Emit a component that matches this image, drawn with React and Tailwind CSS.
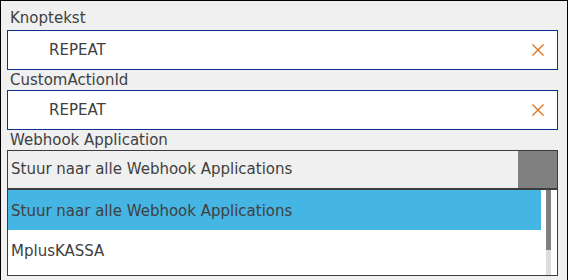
import React from "react";

const font = { fontFamily: '"DejaVu Sans", "Open Sans", sans-serif' };

const ClearIcon = () => (
  <svg width="14" height="14" viewBox="0 0 14 14" className="shrink-0">
    <path d="M1.5 1.5 L12.5 12.5 M12.5 1.5 L1.5 12.5" stroke="#e0701e" strokeWidth="1.3" fill="none" />
  </svg>
);

const Label = ({ children }) => (
  <div className="h-[20px] flex items-center pl-[9px] text-[15px] text-[#404040]">
    {children}
  </div>
);

const TextField = ({ value }) => (
  <div className="ml-[6px] w-[551px] h-[40px] border border-[#0b318f] bg-white flex items-center pl-[41px] pr-[12px]">
    <span className="flex-1 text-[15px] text-[#404040]">{value}</span>
    <ClearIcon />
  </div>
);

const options = ["Stuur naar alle Webhook Applications", "MplusKASSA"];

export default function App() {
  return (
    <div
      style={font}
      className="w-[568px] h-[280px] bg-[#f0f0f0] border-l border-t border-r border-black pt-[7px] overflow-hidden"
    >
      <Label>Knoptekst</Label>
      <div className="mt-[2px]">
        <TextField value="REPEAT" />
      </div>
      <Label>CustomActionId</Label>
      <TextField value="REPEAT" />
      <Label>Webhook Application</Label>

      {/* Select */}
      <div className="ml-[6px] w-[551px] h-[40px] border border-b-2 border-[#3c3c3c] bg-[#f0f0f0] flex">
        <div className="flex-1 flex items-center pl-[3px] text-[15px] text-[#404040]">
          {options[0]}
        </div>
        <div className="w-[39px] bg-[#808080]" />
      </div>

      {/* Open list */}
      <div className="ml-[6px] w-[551px] h-[86px] border-l border-r border-b border-[#3c3c3c] bg-white flex">
        <div className="w-[533px]">
          {options.map((o, i) => (
            <div
              key={o}
              className={
                "h-[40px] flex items-center pl-[3px] pt-[2px] text-[15px] text-[#404040] " +
                (i === 0 ? "bg-[#45b5e3]" : "bg-white")
              }
            >
              {o}
            </div>
          ))}
        </div>
        <div className="ml-[5px] w-[5px] h-full bg-[#dcdcdc] flex flex-col">
          <div className="h-[60px] bg-[#808080]" />
        </div>
      </div>
    </div>
  );
}
